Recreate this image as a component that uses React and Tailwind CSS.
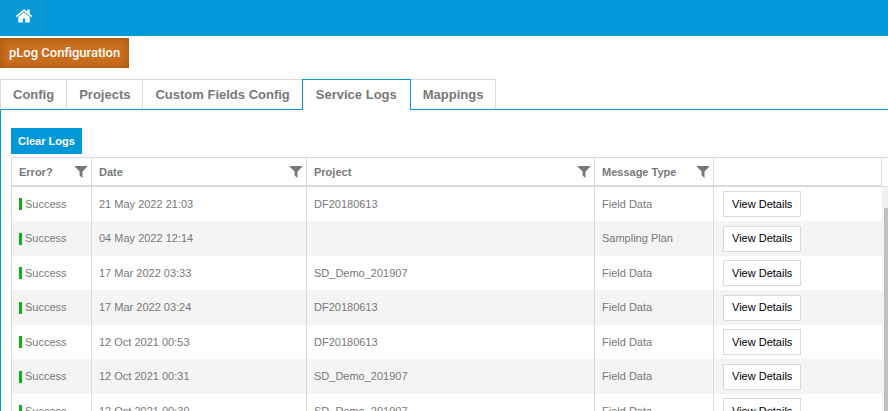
import React, { useState } from 'react'

const tabs = ['Config', 'Projects', 'Custom Fields Config', 'Service Logs', 'Mappings']

const logs = [
  { id: 1, date: '21 May 2022 21:03', project: 'DF20180613', type: 'Field Data' },
  { id: 2, date: '04 May 2022 12:14', project: '', type: 'Sampling Plan' },
  { id: 3, date: '17 Mar 2022 03:33', project: 'SD_Demo_201907', type: 'Field Data' },
  { id: 4, date: '17 Mar 2022 03:24', project: 'DF20180613', type: 'Field Data' },
  { id: 5, date: '12 Oct 2021 00:53', project: 'DF20180613', type: 'Field Data' },
  { id: 6, date: '12 Oct 2021 00:31', project: 'SD_Demo_201907', type: 'Field Data' },
  { id: 7, date: '12 Oct 2021 00:30', project: 'SD_Demo_201907', type: 'Field Data' }
]

const HomeIcon = () => (
  <svg viewBox="0 0 1792 1792" className="w-[18px] h-[18px]" fill="currentColor" aria-hidden="true">
    <path d="M1472 992v480q0 26-19 45t-45 19h-384v-384h-256v384h-384q-26 0-45-19t-19-45v-480q0-1 .5-3t.5-3l575-474 575 474q1 2 1 6zm223-69l-62 74q-8 9-21 11h-3q-13 0-21-7l-692-577-692 577q-12 8-24 7-13-2-21-11l-62-74q-8-10-7-23.5t11-21.5l719-599q32-26 76-26t76 26l244 204v-195q0-14 9-23t23-9h192q14 0 23 9t9 23v408l219 182q10 8 11 21.5t-7 23.5z" />
  </svg>
)

const FilterIcon = () => (
  <svg viewBox="0 0 12 12" className="w-3 h-3" fill="currentColor" aria-hidden="true">
    <path d="M0 0h12v1L7.5 5.5V12L4.6 9.5v-4L0 1z" />
  </svg>
)

const HeaderCell = ({ label }) => (
  <th className="h-[30px] border-t border-r border-b-2 border-[#dadada] pl-[7px] pr-1 pt-px text-left font-bold">
    <div className="flex items-center justify-between">
      <span>{label}</span>
      <button type="button" aria-label={`Filter ${label}`}>
        <FilterIcon />
      </button>
    </div>
  </th>
)

const App = () => {
  const [activeTab, setActiveTab] = useState('Service Logs')
  const [rows, setRows] = useState(logs)

  return (
    <div className="flex flex-col h-screen overflow-hidden bg-white text-[#787878] font-['Liberation_Sans',Arial,sans-serif]">
      <header className="flex h-9 shrink-0 bg-[#0497d8]">
        <a href="#" aria-label="Home" className="flex w-11 justify-center pt-[7px] pl-1 text-white bg-[#079ad5]">
          <HomeIcon />
        </a>
      </header>

      <div className="mt-0.5 shrink-0">
        <button
          type="button"
          className="block h-[30px] px-[9px] bg-[#c96f1e] text-white text-[13px] font-medium font-[Roboto,Arial,sans-serif] shadow-[inset_0_0_8px_#a0500a]"
        >
          pLog Configuration
        </button>
      </div>

      <div role="tablist" className="mt-[11px] flex shrink-0 border-b border-[#0497d8]">
        {tabs.map((tab) => (
          <button
            key={tab}
            type="button"
            role="tab"
            aria-selected={activeTab === tab}
            onClick={() => setActiveTab(tab)}
            className={
              activeTab === tab
                ? '-ml-px -mb-px h-[31px] px-[13px] text-[13px] font-bold bg-white border border-b-0 border-[#0497d8]'
                : 'h-[30px] px-3 text-[13px] font-bold border-t border-r border-[#dadada] first:border-l'
            }
          >
            {tab}
          </button>
        ))}
      </div>

      <main className="flex flex-col flex-1 min-h-0 border-l border-[#0497d8] pl-2.5 pt-[18px] text-[11px]">
        <div className="shrink-0">
          <button
            type="button"
            onClick={() => setRows([])}
            className="block h-[26px] px-[7px] bg-[#0497d8] text-white font-bold"
          >
            Clear Logs
          </button>
        </div>

        <div className="mt-[3px] flex flex-1 min-h-0">
          <div className="flex-1 min-w-0 overflow-hidden">
            <table className="w-full table-fixed border-separate border-spacing-0 border-l border-[#dadada]">
              <colgroup>
                <col className="w-20" />
                <col className="w-[215px]" />
                <col />
                <col className="w-[119px]" />
                <col className="w-[168px]" />
              </colgroup>
              <thead>
                <tr>
                  <HeaderCell label="Error?" />
                  <HeaderCell label="Date" />
                  <HeaderCell label="Project" />
                  <HeaderCell label="Message Type" />
                  <th className="border-t border-r border-b-2 border-[#dadada]" />
                </tr>
              </thead>
              <tbody>
                {rows.map((row) => (
                  <tr key={row.id} className="h-[34px] even:h-[35px] even:bg-[#f4f4f4]">
                    <td className="border-r border-[#dadada] pl-[7px]">
                      <div className="flex items-center gap-[3px]">
                        <span className="w-[3px] h-3 bg-[#0bb01c]" />
                        Success
                      </div>
                    </td>
                    <td className="border-r border-[#dadada] pl-[7px]">{row.date}</td>
                    <td className="border-r border-[#dadada] pl-[7px]">{row.project}</td>
                    <td className="border-r border-[#dadada] pl-[7px]">{row.type}</td>
                    <td className="pl-[9px]">
                      <button
                        type="button"
                        className="block h-[26px] px-2 bg-white border border-[#dadada] text-black"
                      >
                        View Details
                      </button>
                    </td>
                  </tr>
                ))}
              </tbody>
            </table>
          </div>
          <div className="flex flex-col w-1.5 shrink-0">
            <div className="h-[30px] shrink-0 border-y border-[#dadada]" />
            <div className="flex-1 bg-[#f1f1f1] pl-0.5 pt-[21px]">
              <div className="h-full bg-[#c1c1c1]" />
            </div>
          </div>
        </div>
      </main>
    </div>
  )
}

export default App
